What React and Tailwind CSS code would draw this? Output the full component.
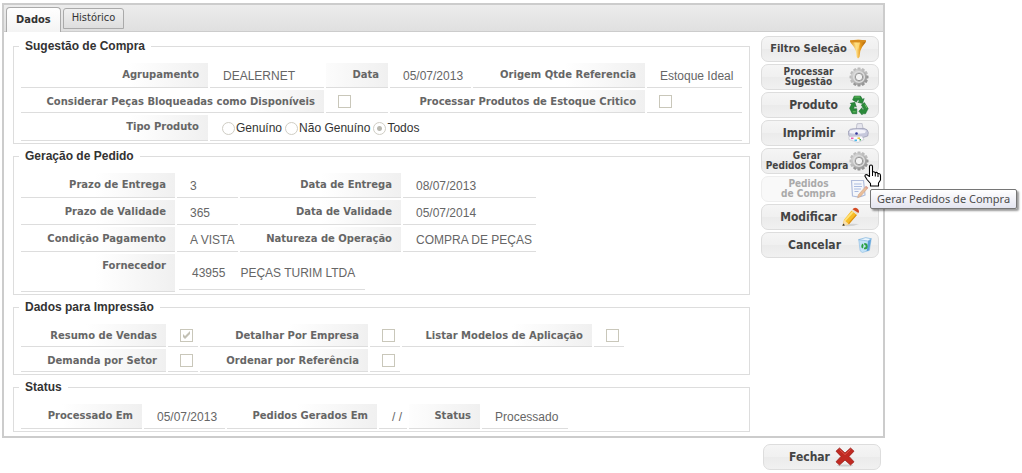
import React from "react";

const VALUE = "font-['Liberation_Sans',sans-serif] text-[12px] text-[#666]";

function Section({ title, children }) {
  return (
    <fieldset className="min-w-0 border border-[#ddd] px-[7px] pt-[10px] pb-[2px]">
      <legend className="-ml-[2px] px-[6px] font-['Liberation_Sans',sans-serif] text-[12px] leading-[14px] font-bold text-[#333]">
        {title}
      </legend>
      {children}
    </fieldset>
  );
}

function FieldLabel({ htmlFor, compact = false, className = "", children }) {
  return (
    <label
      htmlFor={htmlFor}
      className={`border-b border-[#ddd] bg-[linear-gradient(to_left,#f0f0f0,#fff_80px)] pr-[9px] text-right font-['DejaVu_Sans',Verdana,sans-serif] text-[10px] font-bold whitespace-nowrap text-[#666] ${compact ? "pt-[2px] leading-[20px]" : "leading-[24px]"} ${className}`}
    >
      {children}
    </label>
  );
}

function Value({ id, className = "", children }) {
  return (
    <output
      id={id}
      className={`flex min-h-[25px] items-center border-b border-[#ddd] pt-[2px] pl-[13px] whitespace-nowrap ${VALUE} ${className}`}
    >
      {children}
    </output>
  );
}

function Check({ id, checked = false }) {
  return (
    <span className="flex h-[23px] items-center border-b border-[#ddd] pl-[12px]">
      <span className="relative flex size-[13px]">
        <input
          id={id}
          type="checkbox"
          disabled
          defaultChecked={checked}
          className="size-[13px] appearance-none border border-[#c9c7ba] bg-white"
        />
        {checked && (
          <svg viewBox="0 0 13 13" className="pointer-events-none absolute inset-0 size-[13px]" aria-hidden="true">
            <path d="M3 5v3l2 2 5-5V2L5 7z" fill="#c2c0b4" />
          </svg>
        )}
      </span>
    </span>
  );
}

function Radio({ label, checked = false }) {
  return (
    <label className="flex items-center">
      <input
        type="radio"
        name="tipo-produto"
        disabled
        defaultChecked={checked}
        className="mr-[1px] size-[13px] appearance-none rounded-full border border-[#cfcdc4] bg-white checked:bg-[radial-gradient(circle,#b9b8b0_2px,#fff_3px)]"
      />
      {label}
    </label>
  );
}

function FunnelIcon() {
  return (
    <svg viewBox="0 0 18 20" className="h-[20px] w-[18px]" aria-hidden="true">
      <defs>
        <linearGradient id="gold" x1="0" x2="1">
          <stop offset="0" stopColor="#d98a12" />
          <stop offset=".4" stopColor="#ffe08a" />
          <stop offset=".65" stopColor="#e79a1c" />
          <stop offset="1" stopColor="#a85f08" />
        </linearGradient>
      </defs>
      <path d="M1 1.500Q9 0 17 1.500L16.500 3.500Q12.500 8 11.300 12L10.500 18 9 19.500 7.700 18 6.900 12Q5.500 8 1.500 3.500z" fill="url(#gold)" />
      <path d="M1 1.500Q9 0 17 1.500L16.500 3Q9 4.500 1.500 3z" fill="#d98d1d" />
      <path d="M5 3.500h6L9 11z" fill="#ffdf7d" opacity=".8" />
    </svg>
  );
}

function GearIcon() {
  const teeth = [0, 30, 60, 90, 120, 150, 180, 210, 240, 270, 300, 330];
  return (
    <svg viewBox="0 0 20 20" className="size-[20px]" aria-hidden="true">
      <defs>
        <linearGradient id="steel" x1="0" y1="0" x2="1" y2="1">
          <stop offset="0" stopColor="#d6d6d6" />
          <stop offset="1" stopColor="#9a9a9a" />
        </linearGradient>
      </defs>
      {teeth.map((a) => (
        <path key={a} d="M8.700 0.500h2.600l.7 3h-4z" fill={a > 60 && a < 240 ? "#969696" : "#bcbcbc"} transform={`rotate(${a} 10 10)`} />
      ))}
      <circle cx="10" cy="10" r="5.600" fill="none" stroke="url(#steel)" strokeWidth="4" />
      <circle cx="10" cy="10" r="5.400" fill="none" stroke="#dedede" strokeWidth="1.300" />
      <circle cx="10" cy="10" r="3.700" fill="#f3f3f3" stroke="#8d8d8d" strokeWidth=".9" />
    </svg>
  );
}

function RecycleIcon() {
  return (
    <svg viewBox="0 0 20 20" className="size-[20px]" aria-hidden="true">
      <g fill="#2b8a3a" stroke="#17662c" strokeWidth=".5">
        <path d="M5.200 1h6.300l2 3.300 1.700-.8-1.700 5-4.800-1.200 1.700-1L9 4.400 7.400 7.200 3.600 5z" />
        <path d="M15.400 7.600l3.800 6-2.700 5.200h-3.300v1.200L9.800 16.300l3.400-3.800v2h2L12.300 10z" />
        <path d="M1.200 8.300l4.600-1 1.600 4.800-1.700-.8-1.300 2.400h3.400v5H3.200L.6 13.200l1.800-3.600z" />
      </g>
      <path d="M5.400 2h5.500M16 9.500l2 3.700M3.800 16.800h3" stroke="#6abf62" strokeWidth="1" fill="none" />
    </svg>
  );
}

function PrinterIcon() {
  return (
    <svg viewBox="0 0 22 20" className="h-[20px] w-[22px]" aria-hidden="true">
      <path d="M10 .8l5-.5 1.500 7.500H9z" fill="#e6e6ee" stroke="#b0b1c0" strokeWidth=".7" />
      <path d="M1.500 8Q3 5.700 6 5.800l11-.4q4 .8 4.300 4l-.5 3.500-8 2.700-9.300-.7Q.8 12.500 1.500 8z" fill="#c6c8dc" stroke="#9698b0" strokeWidth=".7" />
      <path d="M3 7.500Q10 5.500 19 7.500L18 10Q9 11.500 2.500 10z" fill="#f3f3f9" />
      <circle cx="9.500" cy="10.500" r="1.300" fill="#33379c" />
      <path d="M2 13.500l13-.5 2 3.500-6 3-9-3z" fill="#f9f9fc" stroke="#bbbccb" strokeWidth=".6" />
      <path d="M4 15.300h2.500" stroke="#e860b0" strokeWidth="1.600" />
      <path d="M7.500 17.300H10" stroke="#49b8e8" strokeWidth="1.600" />
      <path d="M10.500 15.200H13" stroke="#f0c93a" strokeWidth="1.600" />
      <path d="M12.500 16.800H14" stroke="#45a955" strokeWidth="1.600" />
    </svg>
  );
}

function NoteIcon() {
  return (
    <svg viewBox="0 0 20 20" className="size-[20px]" aria-hidden="true">
      <path d="M2.500 1.500h12l1.500 14.500Q10 19 3.500 17z" fill="#f4f7fd" stroke="#93a5cf" strokeWidth="1.200" />
      <path d="M5 5h7.500M5 7.500h8M5 10h7M5.500 12.500h4" stroke="#8aa2d6" strokeWidth="1" />
      <path d="M17 7.200l2 1.600-7.500 8.700-2.800 1.300.6-3z" fill="#e3a673" stroke="#b97f56" strokeWidth=".6" />
      <path d="M17 7.200l2 1.600-1 1.200-2-1.700z" fill="#d4776c" />
    </svg>
  );
}

function PencilIcon() {
  return (
    <svg viewBox="0 0 20 20" className="size-[20px]" aria-hidden="true">
      <path d="M4 19q7 1 14-2-7-.5-12 0z" fill="#d2d2d2" />
      <path d="M10.500 3.500l5.500 4.200-8.200 9.500-6.300 1.800 1.500-6.300z" fill="#f7bd27" />
      <path d="M12 4.600l-8.200 9" stroke="#ffe27a" strokeWidth="1.800" />
      <path d="M15.300 7.800l-7.800 9" stroke="#dd8f12" strokeWidth="1.200" />
      <path d="M3 12.700l4.800 4.500-6.300 1.800z" fill="#f8dfae" />
      <path d="M2.100 16.600l2 1.700-2.600.7z" fill="#333" />
      <path d="M10.500 3.500l1.500-1.700 5.600 4.100L16 7.700z" fill="#e7e0d3" />
      <path d="M11.500 2.200Q13.500-.3 16 1.300q3 2 1.500 4.700z" fill="#d44a22" />
    </svg>
  );
}

function BinIcon() {
  return (
    <svg viewBox="0 0 16 18" className="h-[16px] w-[16px]" aria-hidden="true">
      <path d="M1 3l14-1-2 13-8 2.500-2.500-2z" fill="#c3e2f8" stroke="#8dbbe2" strokeWidth=".7" />
      <path d="M11.500 4l3.300-1.500-2 12.500-3 .9z" fill="#5a9fd8" />
      <path d="M.8 3l8-2.300L15.200 2 11.300 4.500z" fill="#e9f5fd" stroke="#7fb3dd" strokeWidth=".8" />
      <circle cx="7.400" cy="10.300" r="2.500" fill="none" stroke="#2ba043" strokeWidth="2.200" strokeDasharray="4 1.200" />
    </svg>
  );
}

function CrossIcon() {
  return (
    <svg viewBox="0 0 20 20" className="size-[20px]" aria-hidden="true">
      <ellipse cx="10" cy="18.500" rx="8" ry="1" fill="#cfcfcf" />
      <path d="M4.500 1L10 6 15.500 1 19 4.200 14 9.400 19 14.800 15.500 18 10 13 4.500 18 1 14.800 6 9.400 1 4.200z" fill="#c12a22" stroke="#9a1c16" strokeWidth=".8" strokeLinejoin="round" />
      <path d="M4.500 2.500L10 7.600l5.500-5.100" stroke="#dc564b" strokeWidth="1" fill="none" />
    </svg>
  );
}

function HandCursor() {
  return (
    <svg viewBox="0 0 18 23" className="h-[23px] w-[18px]" aria-hidden="true">
      <path
        d="M5.500 12.500V2.500Q5.500 1 7 1t1.500 1.500V8q1.500-.8 2.800.7 1.500-.8 2.600.8 2.500-.3 2.600 2.200v4.300L14.500 19v3h-8v-2.500L3 15.500 1 12.300q-.3-2 2-1.600z"
        fill="#fff"
        stroke="#000"
        strokeWidth="1.100"
        strokeLinejoin="round"
      />
      <path d="M8.500 8v4M11.300 9v3.500M14 10v3" stroke="#000" strokeWidth="1" />
    </svg>
  );
}

const SIZES = {
  small: "text-[10px] leading-[10px]",
  medium: "text-[11px] leading-[14px]",
  large: "text-[12px] leading-[14px]",
};

function ActionButton({ icon, size = "large", disabled = false, iconPad = "pr-[9px]", textPad = "pl-[6px]", children }) {
  return (
    <button
      type="button"
      disabled={disabled}
      className="flex h-[26px] w-[118px] items-center rounded-[7px] border border-[#ddd] bg-[linear-gradient(#f5f5f5,#f0f0f0_50%,#ebebeb_51%,#f1f1f1)] font-['DejaVu_Sans_Condensed','DejaVu_Sans',Tahoma,sans-serif] font-bold text-[#444] disabled:border-[#eee] disabled:bg-none disabled:bg-[#f9f9f9] disabled:text-[#aaa]"
    >
      <span className={`flex-1 text-center whitespace-nowrap ${textPad} ${SIZES[size]}`}>{children}</span>
      <span className={`flex shrink-0 ${iconPad} ${disabled ? "opacity-70" : ""}`}>{icon}</span>
    </button>
  );
}

export default function App() {
  return (
    <div className="bg-white pt-[3px] pl-[2px]">
      <main className="w-full max-w-[883px] border-2 border-[#ccc] bg-white">
        <div
          role="tablist"
          className="flex items-end gap-[2px] border-b border-[#ccc] bg-[linear-gradient(#ececec,#e0e0e0)] pt-[2px] pl-[2px] font-['DejaVu_Sans_Condensed','DejaVu_Sans',Tahoma,sans-serif] text-[#333]"
        >
          <button
            type="button"
            role="tab"
            aria-selected="true"
            className="-mb-px h-[25px] rounded-t-[4px] border border-b-0 border-[#aaa] bg-[linear-gradient(#fff,#f4f4f4)] px-[9px] text-[11px] font-bold"
          >
            Dados
          </button>
          <button
            type="button"
            role="tab"
            aria-selected="false"
            className="mb-[2px] h-[21px] rounded-t-[3px] border border-[#aaa] bg-[linear-gradient(#f0f0f0,#dedede)] px-[8px] text-[11px]"
          >
            Histórico
          </button>
        </div>

        <div className="flex items-start gap-[11px] pr-[4px] pb-[4px] pl-[9px]">
          <div className="flex min-w-0 flex-1 flex-col gap-[5px] pt-[7px]">
            <Section title="Sugestão de Compra">
              <div className="grid grid-cols-[187px_114px_62px_81px_172px_95px] gap-[2px]">
                <FieldLabel htmlFor="agrupamento">Agrupamento</FieldLabel>
                <Value id="agrupamento">DEALERNET</Value>
                <FieldLabel htmlFor="data">Data</FieldLabel>
                <Value id="data">05/07/2013</Value>
                <FieldLabel htmlFor="origem">Origem Qtde Referencia</FieldLabel>
                <Value id="origem">Estoque Ideal</Value>
                <FieldLabel htmlFor="bloqueadas" compact className="col-span-2">
                  Considerar Peças Bloqueadas como Disponíveis
                </FieldLabel>
                <Check id="bloqueadas" />
                <FieldLabel htmlFor="critico" compact className="col-span-2">
                  Processar Produtos de Estoque Critico
                </FieldLabel>
                <Check id="critico" />
                <FieldLabel htmlFor="tipo">Tipo Produto</FieldLabel>
                <div
                  id="tipo"
                  role="radiogroup"
                  aria-label="Tipo Produto"
                  className="col-span-5 flex h-[26px] items-center gap-[3px] border-b border-[#ddd] pt-[1px] pl-[12px] font-['Liberation_Sans',sans-serif] text-[12px] text-[#333]"
                >
                  <Radio label="Genuíno" />
                  <Radio label="Não Genuíno" />
                  <Radio label="Todos" checked />
                </div>
              </div>
            </Section>

            <Section title="Geração de Pedido">
              <div className="grid grid-cols-[154px_61px_161px_133px] gap-[2px]">
                <FieldLabel htmlFor="prazo-entrega">Prazo de Entrega</FieldLabel>
                <Value id="prazo-entrega">3</Value>
                <FieldLabel htmlFor="data-entrega">Data de Entrega</FieldLabel>
                <Value id="data-entrega">08/07/2013</Value>
                <FieldLabel htmlFor="prazo-validade">Prazo de Validade</FieldLabel>
                <Value id="prazo-validade">365</Value>
                <FieldLabel htmlFor="data-validade">Data de Validade</FieldLabel>
                <Value id="data-validade">05/07/2014</Value>
                <FieldLabel htmlFor="condicao">Condição Pagamento</FieldLabel>
                <Value id="condicao">A VISTA</Value>
                <FieldLabel htmlFor="natureza">Natureza de Operação</FieldLabel>
                <Value id="natureza">COMPRA DE PEÇAS</Value>
                <FieldLabel htmlFor="fornecedor">Fornecedor</FieldLabel>
                <div className="col-span-3 flex h-[38px] pb-[2px] pl-[2px]">
                  <Value id="fornecedor" className="gap-[15px] pr-[10px]">
                    <span>43955</span>
                    <span>PEÇAS TURIM LTDA</span>
                  </Value>
                </div>
              </div>
            </Section>

            <Section title="Dados para Impressão">
              <div className="grid grid-cols-[145px_30px_168px_30px_190px_30px] gap-[2px]">
                <FieldLabel htmlFor="resumo" compact>Resumo de Vendas</FieldLabel>
                <Check id="resumo" checked />
                <FieldLabel htmlFor="detalhar" compact>Detalhar Por Empresa</FieldLabel>
                <Check id="detalhar" />
                <FieldLabel htmlFor="listar" compact>Listar Modelos de Aplicação</FieldLabel>
                <Check id="listar" />
                <FieldLabel htmlFor="demanda" compact>Demanda por Setor</FieldLabel>
                <Check id="demanda" />
                <FieldLabel htmlFor="ordenar" compact>Ordenar por Referência</FieldLabel>
                <Check id="ordenar" />
              </div>
            </Section>

            <Section title="Status">
              <div className="grid grid-cols-[121px_81px_150px_28px_71px_86px] gap-[2px]">
                <FieldLabel htmlFor="processado">Processado Em</FieldLabel>
                <Value id="processado">05/07/2013</Value>
                <FieldLabel htmlFor="gerados">Pedidos Gerados Em</FieldLabel>
                <Value id="gerados">/ /</Value>
                <FieldLabel htmlFor="status">Status</FieldLabel>
                <Value id="status">Processado</Value>
              </div>
            </Section>
          </div>

          <div className="flex shrink-0 flex-col gap-[2px] pt-[4px]">
            <ActionButton size="medium" icon={<FunnelIcon />} iconPad="pr-[11px]">Filtro Seleção</ActionButton>
            <ActionButton size="small" icon={<GearIcon />}>
              Processar<br />Sugestão
            </ActionButton>
            <ActionButton icon={<RecycleIcon />} textPad="pl-[16px]">Produto</ActionButton>
            <ActionButton icon={<PrinterIcon />} textPad="pl-[9px]">Imprimir</ActionButton>
            <div className="relative">
              <ActionButton size="small" icon={<GearIcon />} textPad="pl-[3px]">
                Gerar<br />Pedidos Compra
              </ActionButton>
              <div className="pointer-events-none absolute top-[16px] left-[103px] z-20">
                <HandCursor />
              </div>
              <div
                role="tooltip"
                className="absolute top-[41px] left-[109px] z-10 rounded-[2px] border border-[#767676] bg-[linear-gradient(#fff,#e4e5f0)] px-[6px] font-['Noto_Sans','Segoe_UI',sans-serif] text-[11px] leading-[18px] whitespace-nowrap text-[#4c4c4c] shadow-[2px_2px_2px_rgba(0,0,0,0.4)]"
              >
                Gerar Pedidos de Compra
              </div>
            </div>
            <ActionButton size="small" icon={<NoteIcon />} disabled>
              Pedidos<br />de Compra
            </ActionButton>
            <ActionButton icon={<PencilIcon />} iconPad="pr-[17px]" textPad="pl-[14px]">Modificar</ActionButton>
            <ActionButton icon={<BinIcon />} iconPad="pr-[5px]" textPad="pl-[10px]">Cancelar</ActionButton>
          </div>
        </div>
      </main>

      <div className="flex w-full max-w-[883px] justify-end pt-[6px] pr-[4px]">
        <ActionButton icon={<CrossIcon />} iconPad="pr-[25px]" textPad="pl-[20px]">Fechar</ActionButton>
      </div>
    </div>
  );
}
